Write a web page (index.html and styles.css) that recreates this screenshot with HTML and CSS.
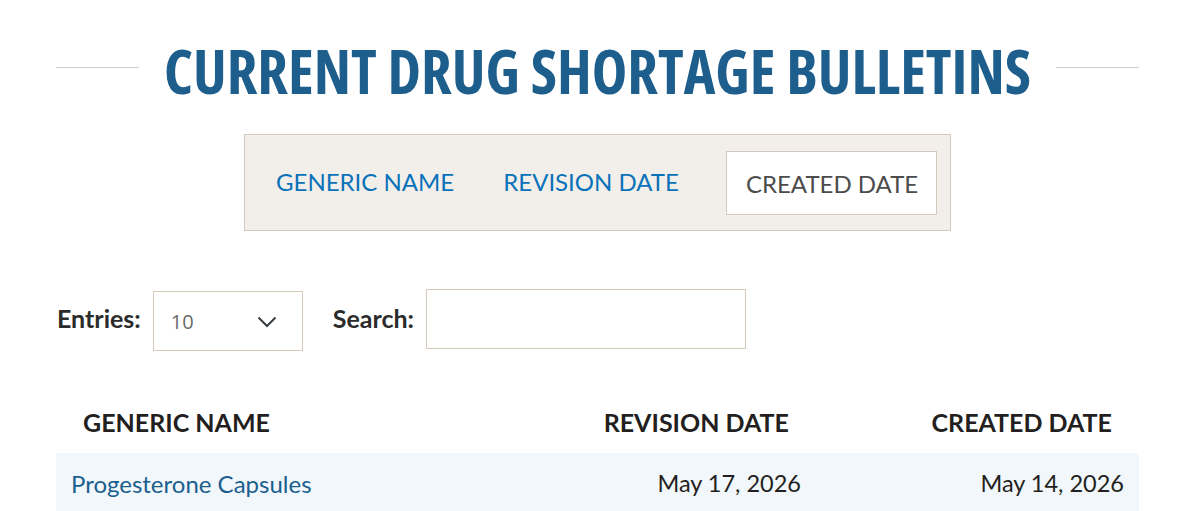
FILE: index.html
```html
<!DOCTYPE html>
<html lang="en">
<head>
<meta charset="utf-8">
<title>Current Drug Shortage Bulletins</title>
<link rel="stylesheet" href="styles.css">
</head>
<body>
<main class="page">
  <header class="title-row">
    <span class="rule"></span>
    <h1 class="title">CURRENT DRUG SHORTAGE BULLETINS</h1>
    <span class="rule"></span>
  </header>

  <nav class="tabs">
    <a class="tab tab-1" href="#">GENERIC NAME</a>
    <a class="tab tab-2" href="#">REVISION DATE</a>
    <a class="tab tab-active" href="#">CREATED DATE</a>
  </nav>

  <div class="controls">
    <label class="ctl-label">Entries:</label>
    <div class="select">
      <span class="select-value">10</span>
      <svg class="chev" width="20" height="12" viewBox="0 0 20 12"><path d="M1.5 1.5 L10 10 L18.5 1.5" fill="none" stroke="#3a3f44" stroke-width="2"/></svg>
    </div>
    <label class="ctl-label search-label">Search:</label>
    <div class="search-box"></div>
  </div>

  <div class="table">
    <div class="thead">
      <div class="th th-name">GENERIC NAME</div>
      <div class="th th-date">REVISION DATE</div>
      <div class="th th-date th-last">CREATED DATE</div>
    </div>
    <div class="tr">
      <div class="td td-name"><a href="#">Progesterone Capsules</a></div>
      <div class="td td-date">May 17, 2026</div>
      <div class="td td-date">May 14, 2026</div>
    </div>
  </div>
</main>
</body>
</html>
```

FILE: styles.css
```css
* { box-sizing: border-box; }
html, body { margin: 0; padding: 0; background: #fff; }
body { font-family: Lato, "Open Sans", sans-serif; color: #231f20; }

.page {
  width: 1083px;
  margin: 0 0 0 56px;
  padding-top: 38px;
}

.title-row {
  display: flex;
  align-items: center;
  gap: 25px;
}
.rule {
  flex: 1;
  height: 1px;
  background: #d3cdc4;
  margin-top: -3px;
}
.title {
  margin: 0;
  font-family: "Open Sans", sans-serif;
  font-weight: 700;
  font-stretch: 75%;
  font-size: 60px;
  line-height: 62px;
  color: #1d5e8d;
  white-space: nowrap;
  position: relative;
  top: 2px;
}

.tabs {
  display: flex;
  align-items: center;
  width: 707px;
  height: 97px;
  margin: 34px auto 0;
  padding: 0 0 0 31px;
  background: #f2efea;
  border: 1px solid #d3c9bc;
}
.tab {
  display: block;
  font-size: 24px;
  color: #0a72ba;
  text-decoration: none;
  line-height: 62px;
  height: 64px;
  white-space: nowrap;
}
.tab-1 { margin-right: 49px; }
.tab-2 { margin-right: 47px; }
.tab-active {
  color: #4c4c4c;
  background: #fff;
  border: 1px solid #d3c9bc;
  padding: 0 18px 0 19px;
  line-height: 64px;
}

.controls {
  display: flex;
  align-items: center;
  margin-top: 57px;
  height: 62px;
}
.ctl-label {
  font-weight: 700;
  font-size: 25px;
  color: #2b2b2b;
  margin-left: 1px;
  margin-right: 12px;
  margin-top: -2px;
}
.select {
  width: 150px;
  height: 60px;
  border: 1px solid #d3c9bc;
  display: flex;
  align-items: center;
  justify-content: space-between;
  padding: 0 25px 0 17px;
  margin-top: 3px;
}
.select-value {
  font-family: "Open Sans", sans-serif;
  font-size: 20px;
  color: #6b6b6b;
  margin-top: 2px;
}
.chev { margin-top: 2px; }
.search-label { margin-left: 30px; margin-right: 12px; }
.search-box {
  width: 320px;
  height: 60px;
  border: 1px solid #d3c9bc;
}

.table { margin-top: 46px; }
.thead, .tr {
  display: grid;
  grid-template-columns: 1fr 310px 323px;
}
.thead { height: 57px; align-items: center; }
.th {
  font-weight: 700;
  font-size: 25px;
  color: #231f20;
  white-space: nowrap;
  padding-bottom: 6px;
}
.th-name { padding-left: 27px; }
.th-date { text-align: right; padding-right: 27px; }
.tr {
  background: #f2f7fb;
  height: 60px;
  align-items: center;
}
.td { font-size: 24px; color: #231f20; white-space: nowrap; }
.td-name { padding-left: 15px; }
.td-name a { color: #1a5f8f; text-decoration: none; }
.td-date { text-align: right; padding-right: 15px; font-size: 23.5px; }
```
